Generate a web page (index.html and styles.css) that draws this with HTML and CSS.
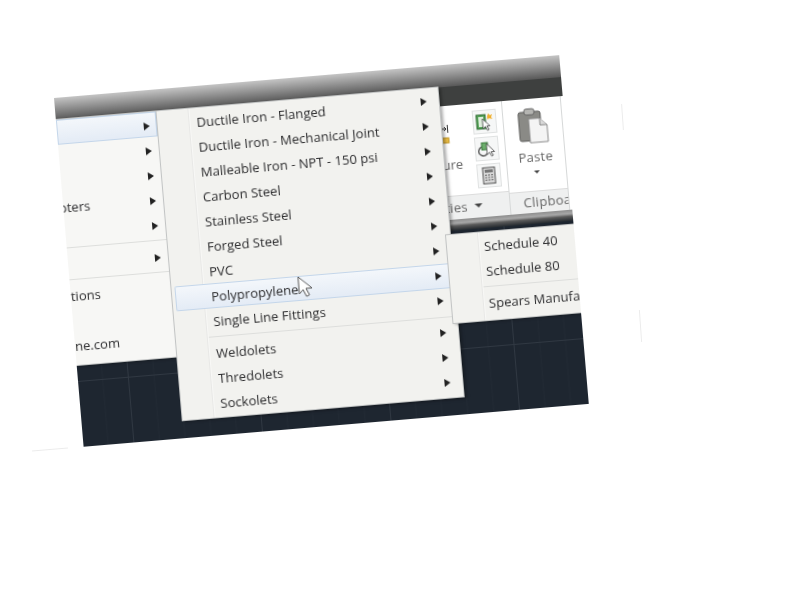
FILE: index.html
```html
<!DOCTYPE html>
<html>

<head>
    <title>Fittings Menu</title>
    <link rel="stylesheet" href="styles.css">
</head>

<body>
    <!-- faint scratches left on the white page -->
    <i class="mark mark-top"></i>
    <i class="mark mark-side"></i>
    <i class="mark mark-low"></i>

    <div class="shot">
        <div class="title-fade"></div>
        <div class="title-dark"></div>

        <div class="ribbon">
            <div class="panel panel-main">
                <div class="panel-body">
                    <div class="tool">
                        <svg class="tool-icon" width="14" height="20" viewBox="0 0 14 20">
                            <path d="M0 4h6M4 2l2 2-2 2M7.500 0v8" stroke="#333" fill="none"/>
                            <rect x="0" y="13" width="8" height="5" fill="#e8bb45" stroke="#c49a2c"/>
                        </svg>
                        <span>Measure</span>
                    </div>
                    <div class="tool-stack">
                        <div class="tool-btn">
                            <svg width="20" height="20" viewBox="0 0 20 20">
                                <rect x="2" y="3" width="9" height="14" fill="#58a55a" stroke="#2f6b33"/>
                                <rect x="4" y="5" width="5" height="10" fill="#dfeedd"/>
                                <path d="M14 2l2 2 2-1-1 3 1 2-3-1-2 1 0-3z" fill="#f0b030"/>
                                <path d="M8 7v10l2.500-2 2 4 1.500-1-2-3.500h3z" fill="#fff" stroke="#444" stroke-width=".8"/>
                            </svg>
                        </div>
                        <div class="tool-btn">
                            <svg width="20" height="20" viewBox="0 0 20 20">
                                <path d="M7 8a4.500 4.500 0 1 0 3 7" fill="none" stroke="#666" stroke-width="1.500"/>
                                <rect x="5" y="4" width="6" height="7" fill="#6cae6c" stroke="#3a7a3d"/>
                                <path d="M10 5v11l2.500-2 2 4 1.500-1-2-3.500h3.500z" fill="#fff" stroke="#444" stroke-width=".8"/>
                            </svg>
                        </div>
                        <div class="tool-btn">
                            <svg width="18" height="20" viewBox="0 0 18 20">
                                <rect x="3" y="2" width="12" height="16" fill="#d8d8d8" stroke="#555"/>
                                <rect x="5" y="4" width="8" height="3" fill="#777"/>
                                <path d="M5 9.500h8M5 12h8M5 14.500h8" stroke="#666" stroke-dasharray="2 1"/>
                            </svg>
                        </div>
                    </div>
                </div>
                <div class="panel-title panel-title-main">
                    <span>Utilities</span>
                    <i class="title-arrow"></i>
                </div>
            </div>

            <div class="panel panel-clip">
                <div class="panel-body paste">
                    <svg width="32" height="36" viewBox="0 0 32 36">
                        <rect x="2" y="4" width="22" height="29" rx="2" fill="#8a8a86" stroke="#5c5c5a"/>
                        <rect x="8" y="1" width="10" height="6" rx="2" fill="#b5b5b2" stroke="#666"/>
                        <path d="M12 11h11l7 7v17H12z" fill="#f4f4f4" stroke="#8c8c8c"/>
                        <path d="M23 11v7h7" fill="#d9d9d9" stroke="#8c8c8c"/>
                    </svg>
                    <span class="paste-label">Paste</span>
                    <i class="paste-arrow"></i>
                </div>
                <div class="panel-title">Clipboard</div>
            </div>
            <div class="panel-end"></div>
        </div>

        <div class="band"></div>
        <div class="canvas"></div>

        <!-- first menu, text runs off the left edge -->
        <div class="menu menu-left">
            <div class="row row-active"><i class="arrow"></i></div>
            <div class="row"><i class="arrow"></i></div>
            <div class="row"><i class="arrow"></i></div>
            <div class="row"><span class="cut cut-short">Adapters</span><i class="arrow"></i></div>
            <div class="row"><i class="arrow"></i></div>
            <div class="sep"></div>
            <div class="row"><i class="arrow"></i></div>
            <div class="sep"></div>
            <div class="row"><span class="cut cut-opts">Options</span></div>
            <div class="row"></div>
            <div class="row"><span class="cut cut-web">www.online.com</span></div>
        </div>

        <div class="menu menu-main">
            <div class="row"><span>Ductile Iron - Flanged</span><i class="arrow"></i></div>
            <div class="row"><span>Ductile Iron - Mechanical Joint</span><i class="arrow"></i></div>
            <div class="row"><span>Malleable Iron - NPT - 150 psi</span><i class="arrow"></i></div>
            <div class="row"><span>Carbon Steel</span><i class="arrow"></i></div>
            <div class="row"><span>Stainless Steel</span><i class="arrow"></i></div>
            <div class="row"><span>Forged Steel</span><i class="arrow"></i></div>
            <div class="row"><span>PVC</span><i class="arrow"></i></div>
            <div class="row row-active"><span>Polypropylene</span><i class="arrow"></i></div>
            <div class="row"><span>Single Line Fittings</span><i class="arrow"></i></div>
            <div class="sep"></div>
            <div class="row"><span>Weldolets</span><i class="arrow"></i></div>
            <div class="row"><span>Thredolets</span><i class="arrow"></i></div>
            <div class="row"><span>Sockolets</span><i class="arrow"></i></div>
        </div>

        <div class="menu menu-sub">
            <div class="row"><span>Schedule 40</span></div>
            <div class="row"><span>Schedule 80</span></div>
            <div class="sep"></div>
            <div class="row"><span>Spears Manufacturing</span></div>
        </div>

        <svg class="cursor" width="17" height="23" viewBox="0 0 17 23">
            <path d="M1 1v17l4-4 3 7 3-1.300-3-6.700h6z" fill="#fff" stroke="#555" stroke-width="1"/>
        </svg>
    </div>
</body>

</html>
```

FILE: styles.css
```css
/* General Styles */
html,
body {
    margin: 0;
    background-color: #fff;
}

body {
    width: 790px;
    height: 594px;
    overflow: hidden;
    position: relative;
    font-family: "Open Sans", "Noto Sans", sans-serif;
}

.mark {
    position: absolute;
    background-color: #ececec;
}

.mark-top {
    left: 622px;
    top: 104px;
    width: 1px;
    height: 26px;
    transform: rotate(-4deg);
}

.mark-side {
    left: 640px;
    top: 310px;
    width: 1px;
    height: 32px;
    transform: rotate(-4deg);
}

.mark-low {
    left: 32px;
    top: 449px;
    width: 36px;
    height: 1px;
    transform: rotate(-5deg);
}

/* The photographed screen, tilted on the white page */
.shot {
    position: absolute;
    left: 54px;
    top: 98px;
    width: 507px;
    height: 350px;
    overflow: hidden;
    display: flex;
    flex-direction: column;
    background-color: #fff;
    transform: rotate(-4.85deg);
    transform-origin: 0 0;
    filter: blur(0.5px);
}

.title-fade {
    height: 22px;
    background: linear-gradient(#c4c4c4, #585858);
}

.title-dark {
    height: 19px;
    background-color: #3e403f;
}

/* Ribbon */
.ribbon {
    height: 114px;
    display: flex;
    background-color: #fff;
}

.panel {
    display: flex;
    flex-direction: column;
    border-right: 1px solid #d6d8d8;
}

.panel-main {
    width: 445px;
}

.panel-clip {
    width: 58px;
}

.panel-end {
    flex: 1;
}

.panel-body {
    height: 90px;
    display: flex;
    justify-content: flex-end;
    padding-right: 6px;
}

.panel-title {
    height: 24px;
    box-sizing: border-box;
    border-top: 1px solid #dcdcdc;
    background-color: #eff0f0;
    color: #666;
    font-size: 13px;
    letter-spacing: 0.3px;
    line-height: 21px;
    padding-left: 13px;
    white-space: nowrap;
    overflow: hidden;
}

.panel-title-main {
    display: flex;
    justify-content: flex-end;
    align-items: center;
    padding-right: 26px;
    position: relative;
}

.title-arrow {
    position: absolute;
    right: 27px;
    top: 9px;
    border-left: 4px solid transparent;
    border-right: 4px solid transparent;
    border-top: 4px solid #444;
}

.panel-title-main span {
    margin-right: 16px;
}

.tool {
    display: flex;
    flex-direction: column;
    align-items: flex-end;
    font-size: 13px;
    color: #666;
    margin-right: 13px;
    padding-top: 19px;
}

.tool-icon {
    margin: 0 6px 11px 0;
}

.tool-stack {
    display: flex;
    flex-direction: column;
    gap: 3px;
    padding-top: 7px;
}

.tool-btn {
    width: 22px;
    height: 22px;
    border: 1px solid #e0e2e2;
    background-color: #f6f7f7;
    display: flex;
    justify-content: center;
    align-items: center;
}

.paste {
    padding: 9px 0 0;
    flex-direction: column;
    align-items: center;
    justify-content: flex-start;
}

.paste-label {
    margin-top: 4px;
    font-size: 13px;
    letter-spacing: 0.3px;
    color: #666;
}

.paste-arrow {
    margin-top: 5px;
    border-left: 3px solid transparent;
    border-right: 3px solid transparent;
    border-top: 3px solid #444;
}

.band {
    height: 11px;
    background: linear-gradient(#8e8e8e 0, #a8a8a8 35%, #5a5a5a 60%, #262b30 100%);
}

/* Drawing area with its grid */
.canvas {
    flex: 1;
    background-color: #1e2630;
    background-image:
        linear-gradient(to right, #303842 1px, transparent 1px),
        linear-gradient(to bottom, #303842 1px, transparent 1px),
        linear-gradient(to right, #222a34 1px, transparent 1px);
    background-size: 129px 129px, 129px 129px, 25.800px 25.800px;
    background-position: 50px 0, 0 -11px, 50px 0;
}

/* Menus */
.menu {
    position: absolute;
    box-sizing: border-box;
    background-color: #f2f2ef;
    border: 1px solid #c2c4c4;
    font-size: 13px;
    letter-spacing: 0.04px;
    color: #2c2c2e;
    box-shadow: 2px 1px 3px rgba(0, 0, 0, 0.35);
}

.menu::before {
    content: "";
    position: absolute;
    top: 0;
    bottom: 0;
    left: 31px;
    width: 1px;
    background-color: #e8e8e6;
    border-right: 1px solid #f8f8f6;
}

.row {
    height: 25px;
    display: flex;
    align-items: center;
    position: relative;
    padding-left: 39px;
    white-space: nowrap;
}

.arrow {
    position: absolute;
    top: 8px;
    border-left: 6px solid #222;
    border-top: 4.500px solid transparent;
    border-bottom: 4.500px solid transparent;
}

.sep {
    height: 7px;
    margin-left: 33px;
    box-sizing: border-box;
    border-bottom: 1px solid #dddedc;
    transform: translateY(-3px);
}

.row-active {
    background: linear-gradient(#f4f7fb, #e3ebf5);
    box-shadow: inset 0 0 0 1px #c4d6ea;
    border-radius: 2px;
}

.menu-main {
    left: 100px;
    top: 21px;
    width: 284px;
    height: 312px;
    padding-top: 1px;
}

.menu-main .arrow {
    left: 264px;
}

.menu-main .row-active {
    margin: 0 -6px 0 3px;
    padding-left: 36px;
}

.menu-main .row-active .arrow {
    left: 261px;
}

.menu-left {
    left: 0;
    top: 21px;
    width: 101px;
    height: 248px;
    border-left: none;
    background-color: #f7f7f5;
}

.menu-left::before {
    display: none;
}

.menu-left .row {
    padding-left: 0;
}

.menu-left .row-active {
    border-radius: 0;
}

.menu-left .arrow {
    left: 87px;
    top: 10px;
}

.menu-left .sep {
    margin-left: 0;
}

.cut {
    display: flex;
    justify-content: flex-end;
}

.cut-short {
    width: 27px;
}

.cut-opts {
    width: 30px;
}

.cut-web {
    width: 45px;
}

.menu-sub {
    left: 378px;
    top: 169px;
    width: 129px;
    height: 90px;
    padding-top: 1px;
    overflow: hidden;
    border-right: none;
}

.menu-sub .row {
    padding-left: 37px;
}

.cursor {
    position: absolute;
    left: 227px;
    top: 198px;
}
```
